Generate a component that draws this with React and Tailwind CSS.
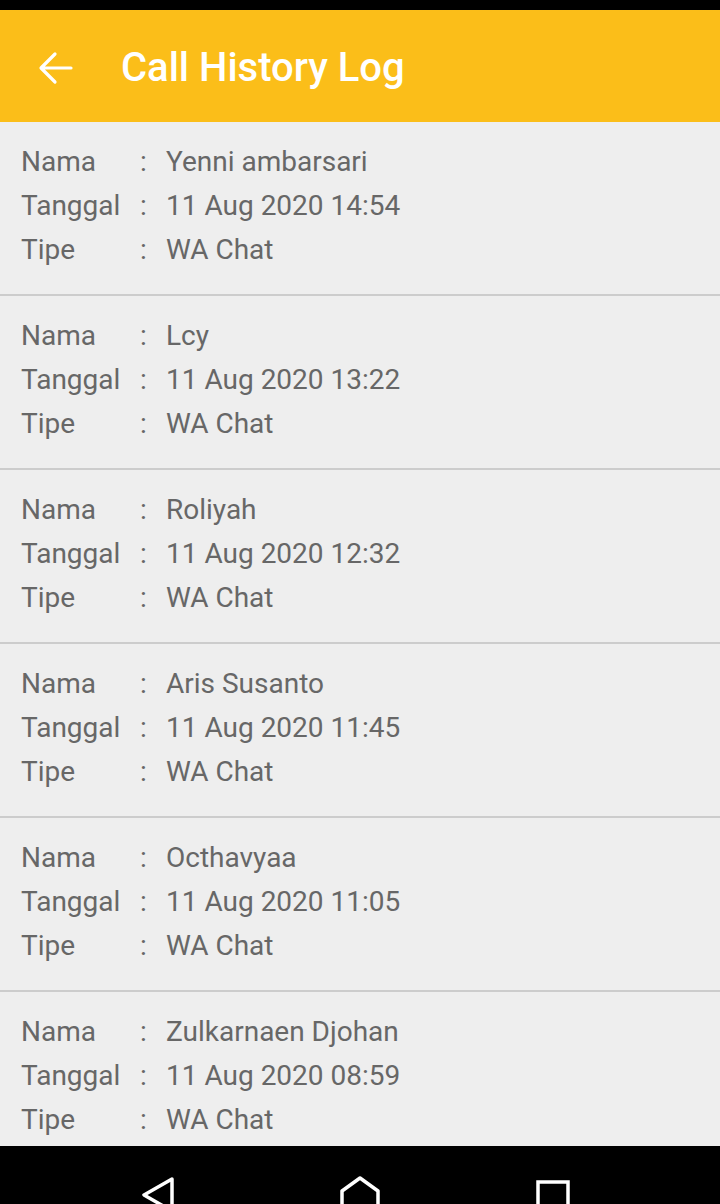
const logs = [
  { nama: "Yenni ambarsari", tanggal: "11 Aug 2020 14:54", tipe: "WA Chat" },
  { nama: "Lcy", tanggal: "11 Aug 2020 13:22", tipe: "WA Chat" },
  { nama: "Roliyah", tanggal: "11 Aug 2020 12:32", tipe: "WA Chat" },
  { nama: "Aris Susanto", tanggal: "11 Aug 2020 11:45", tipe: "WA Chat" },
  { nama: "Octhavyaa", tanggal: "11 Aug 2020 11:05", tipe: "WA Chat" },
  { nama: "Zulkarnaen Djohan", tanggal: "11 Aug 2020 08:59", tipe: "WA Chat" },
]

function Field({ label, value }) {
  return (
    <div className="flex h-[44px] items-center pl-[21px]">
      <span className="w-[119px] shrink-0">{label}</span>
      <span className="w-[26px] shrink-0">:</span>
      <span>{value}</span>
    </div>
  )
}

export default function App() {
  return (
    <div
      className="flex h-[1204px] w-[720px] flex-col overflow-hidden bg-[#eeeeee]"
      style={{ fontFamily: "Roboto, 'Noto Sans', sans-serif" }}
    >
      {/* status bar, icons cut off */}
      <div className="h-[10px] shrink-0 bg-black" />

      {/* app bar */}
      <div className="flex h-[112px] shrink-0 items-center bg-[#fbbe19] pt-[4px]">
        <svg
          className="ml-[38px] h-[36px] w-[36px]"
          viewBox="0 0 36 36"
          fill="none"
          stroke="white"
          strokeWidth="3.2"
          strokeLinecap="round"
          strokeLinejoin="round"
        >
          <path d="M33 18H4M17 4L3 18l14 14" />
        </svg>
        <h1 className="ml-[47px] text-[40px] font-medium text-white">
          Call History Log
        </h1>
      </div>

      {/* list */}
      <div className="flex-1 overflow-hidden">
        {logs.map((log) => (
          <div
            key={log.tanggal}
            className="border-b-2 border-[#cccccc] pb-[22px] pt-[18px] text-[28px] text-[#676767]"
          >
            <Field label="Nama" value={log.nama} />
            <Field label="Tanggal" value={log.tanggal} />
            <Field label="Tipe" value={log.tipe} />
          </div>
        ))}
      </div>

      {/* navigation bar */}
      <div className="relative h-[58px] shrink-0 bg-black">
        <svg
          className="absolute left-[140px] top-[31px] h-[40px] w-[40px]"
          viewBox="0 0 40 40"
          fill="none"
          stroke="white"
          strokeWidth="3.5"
          strokeLinejoin="round"
        >
          <path d="M32 2L4 18l28 16z" />
        </svg>
        <svg
          className="absolute left-[338px] top-[30px] h-[40px] w-[44px]"
          viewBox="0 0 44 40"
          fill="none"
          stroke="white"
          strokeWidth="3.5"
          strokeLinejoin="round"
        >
          <path d="M4 15L22 2l18 13v24H4z" />
        </svg>
        <svg
          className="absolute left-[535px] top-[34px] h-[40px] w-[36px]"
          viewBox="0 0 36 40"
          fill="none"
          stroke="white"
          strokeWidth="3.5"
        >
          <rect x="3" y="2" width="30" height="34" />
        </svg>
      </div>
    </div>
  )
}
